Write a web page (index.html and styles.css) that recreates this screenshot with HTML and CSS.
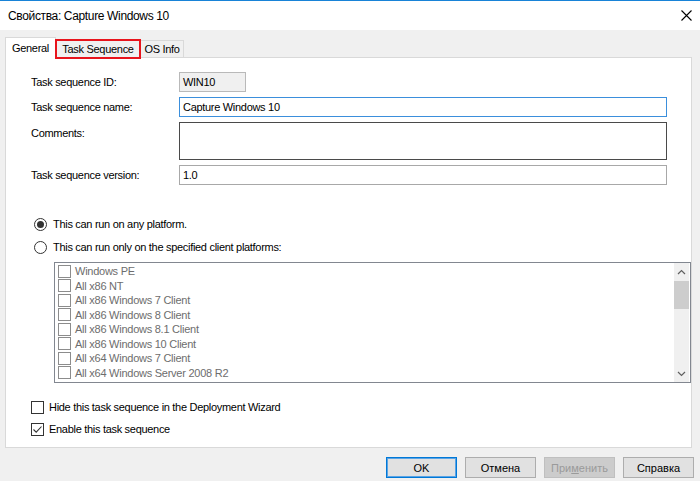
FILE: index.html
```html
<!DOCTYPE html>
<html>
<head>
<meta charset="utf-8">
<link rel="stylesheet" href="styles.css">
</head>
<body>
<div class="window">
  <div class="titlebar">
    <span class="title">Свойства: Capture Windows 10</span>
    <svg class="close" width="11" height="11" viewBox="0 0 11 11"><path d="M0.5 0.5 L10.5 10.5 M10.5 0.5 L0.5 10.5" stroke="#000" stroke-width="1.1" fill="none"/></svg>
  </div>
  <div class="content">
    <div class="tabs">
      <div class="tab active w-general">General</div>
      <div class="tab marked w-ts">Task Sequence</div>
      <div class="tab w-os">OS Info</div>
    </div>
    <div class="panel">
      <div class="form">
        <div class="lbl">Task sequence ID:</div>
        <div class="field readonly short">WIN10</div>
        <div class="lbl">Task sequence name:</div>
        <div class="field focused">Capture Windows 10</div>
        <div class="lbl top">Comments:</div>
        <div class="field multi"></div>
        <div class="lbl">Task sequence version:</div>
        <div class="field plain">1.0</div>
      </div>
      <div class="radios">
        <div class="radio-row"><span class="radio on"></span><span>This can run on any platform.</span></div>
        <div class="radio-row"><span class="radio"></span><span>This can run only on the specified client platforms:</span></div>
      </div>
      <div class="listbox">
        <div class="items">
          <div class="item"><span class="cb"></span><span>Windows PE</span></div>
          <div class="item"><span class="cb"></span><span>All x86 NT</span></div>
          <div class="item"><span class="cb"></span><span>All x86 Windows 7 Client</span></div>
          <div class="item"><span class="cb"></span><span>All x86 Windows 8 Client</span></div>
          <div class="item"><span class="cb"></span><span>All x86 Windows 8.1 Client</span></div>
          <div class="item"><span class="cb"></span><span>All x86 Windows 10 Client</span></div>
          <div class="item"><span class="cb"></span><span>All x64 Windows 7 Client</span></div>
          <div class="item"><span class="cb"></span><span>All x64 Windows Server 2008 R2</span></div>
        </div>
        <div class="scrollbar">
          <div class="sb-btn"><svg width="9" height="6" viewBox="0 0 9 6"><path d="M1 5 L4.5 1.5 L8 5" stroke="#606060" stroke-width="1.2" fill="none"/></svg></div>
          <div class="sb-thumb"></div>
          <div class="sb-track"></div>
          <div class="sb-btn"><svg width="9" height="6" viewBox="0 0 9 6"><path d="M1 1 L4.5 4.5 L8 1" stroke="#606060" stroke-width="1.2" fill="none"/></svg></div>
        </div>
      </div>
      <div class="checks">
        <div class="check-row"><span class="box"></span><span>Hide this task sequence in the Deployment Wizard</span></div>
        <div class="check-row"><span class="box"><svg width="11" height="11" viewBox="0 0 11 11"><path d="M1.5 5.5 L4.2 8.2 L9.5 2.5" stroke="#333" stroke-width="1.1" fill="none"/></svg></span><span>Enable this task sequence</span></div>
      </div>
    </div>
    <div class="buttons">
      <div class="btn default">OK</div>
      <div class="btn">Отмена</div>
      <div class="btn disabled">При<u>м</u>енить</div>
      <div class="btn">Справка</div>
    </div>
  </div>
</div>
</body>
</html>
```

FILE: styles.css
```css
* { box-sizing: border-box; }
html, body { margin: 0; padding: 0; }
body {
  font-family: "Liberation Sans", Arial, sans-serif;
  font-size: 11px;
  letter-spacing: -0.3px;
  color: #000;
  background: #f0f0f0;
}
.window {
  width: 700px;
  height: 481px;
  display: flex;
  flex-direction: column;
  border-top: 1px solid #1883d7;
  background: #f0f0f0;
  overflow: hidden;
}
.titlebar {
  height: 29px;
  flex: none;
  background: #fff;
  display: flex;
  align-items: center;
  justify-content: space-between;
  padding: 0 8px 0 8px;
}
.title { font-size: 12px; letter-spacing: -0.35px; }
.close { display: block; }
.content {
  flex: 1;
  display: flex;
  flex-direction: column;
  padding: 7px 8px 0 5px;
}
.tabs {
  display: flex;
  align-items: flex-end;
  height: 21px;
  margin-bottom: -1px;
  position: relative;
  z-index: 1;
}
.tab {
  height: 18px;
  border: 1px solid #d9d9d9;
  background: #f0f0f0;
  display: flex;
  align-items: center;
  justify-content: center;
  margin-left: -1px;
}
.tab:first-child { margin-left: 0; }
.tab.active {
  height: 21px;
  background: #fff;
  border-bottom: none;
  padding-bottom: 1px;
}
.w-general { width: 51px; }
.w-ts { width: 86px; }
.w-os { width: 44px; }
.tab.marked { position: relative; }
.tab.marked::after {
  content: "";
  position: absolute;
  left: -1px;
  right: -1px;
  top: -2px;
  bottom: -2px;
  border: 2px solid #e8141c;
}
.panel {
  height: 391px;
  flex: none;
  background: #fff;
  border: 1px solid #d9d9d9;
  padding: 14px 0 0 25px;
  display: flex;
  flex-direction: column;
}
.form {
  display: grid;
  grid-template-columns: 148px 488px;
  row-gap: 5px;
  align-items: center;
}
.lbl.top { align-self: start; padding-top: 5px; }
.field {
  height: 20px;
  border: 1px solid #adadad;
  background: #fff;
  padding: 0 3px;
  display: flex;
  align-items: center;
}
.field.readonly {
  width: 67px;
  background: #f0f0f0;
  border-color: #b9b9b9;
}
.field.focused { border-color: #3b8fdc; }
.field.multi { height: 38px; border-color: #4a4a4a; }
.field.plain { border-color: #a8a8a8; }
.radios {
  margin-top: 31px;
  display: flex;
  flex-direction: column;
  gap: 7px;
  padding-left: 3px;
}
.radio-row {
  height: 16px;
  display: flex;
  align-items: center;
  gap: 6px;
}
.radio {
  width: 13px;
  height: 13px;
  border: 1px solid #333;
  border-radius: 50%;
  display: flex;
  align-items: center;
  justify-content: center;
}
.radio.on::after {
  content: "";
  width: 7px;
  height: 7px;
  border-radius: 50%;
  background: #333;
}
.listbox {
  margin-top: 7px;
  margin-left: 23px;
  width: 637px;
  height: 121px;
  border: 1px solid #828790;
  display: flex;
  padding: 0 1px 0 0;
}
.items {
  flex: 1;
  padding: 1px 0 0 3px;
  overflow: hidden;
  color: #6d6d6d;
  letter-spacing: -0.25px;
}
.item {
  height: 14.5px;
  display: flex;
  align-items: center;
  gap: 4px;
}
.cb {
  width: 13px;
  height: 13px;
  border: 1px solid #8c8c8c;
  background: #fff;
}
.scrollbar {
  width: 15px;
  background: #f0f0f0;
  display: flex;
  flex-direction: column;
}
.sb-btn {
  height: 17px;
  display: flex;
  align-items: center;
  justify-content: center;
}
.sb-thumb {
  height: 28px;
  margin-top: 1px;
  background: #cdcdcd;
}
.sb-track { flex: 1; }
.checks {
  margin-top: 16px;
  display: flex;
  flex-direction: column;
  gap: 6px;
}
.check-row {
  height: 16px;
  display: flex;
  align-items: center;
  gap: 5px;
}
.box {
  width: 13px;
  height: 13px;
  border: 1px solid #333;
  display: flex;
  align-items: center;
  justify-content: center;
}
.box svg { display: block; }
.buttons {
  margin-top: 9px;
  margin-right: -2px;
  display: flex;
  justify-content: flex-end;
  gap: 8px;
}
.btn {
  width: 71px;
  height: 21px;
  border: 1px solid #adadad;
  background: #e1e1e1;
  display: flex;
  align-items: center;
  justify-content: center;
  letter-spacing: 0;
}
.btn.default {
  border-color: #0078d7;
  box-shadow: inset 0 0 0 1px #5aa3e4;
}
.btn.disabled {
  background: #cccccc;
  border-color: #bfbfbf;
  color: #9a9a9a;
}
.btn u { text-decoration: underline; }
```
